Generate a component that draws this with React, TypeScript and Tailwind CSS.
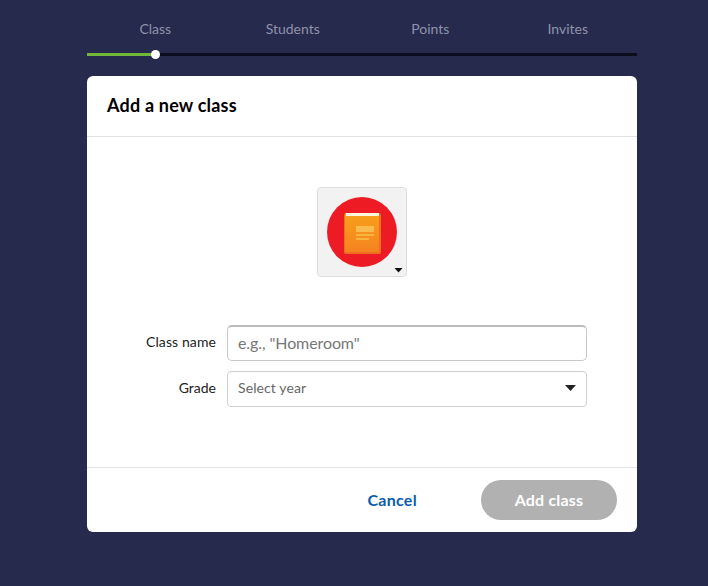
import React from 'react';

const steps = ['Class', 'Students', 'Points', 'Invites'];

function BookBadge() {
  return (
    <div className="relative w-[90px] h-[90px] bg-[#f2f2f3] border border-[#dcdcdc] rounded-[4px] flex items-center justify-center">
      <svg width="70" height="70" viewBox="0 0 70 70">
        <defs>
          <linearGradient id="cover" x1="0" y1="0" x2="0" y2="1">
            <stop offset="0" stopColor="#f7a11a" />
            <stop offset="1" stopColor="#f58220" />
          </linearGradient>
        </defs>
        <circle cx="35" cy="35" r="35" fill="#ed1c24" />
        <rect x="17" y="16" width="37" height="41" rx="2" fill="#ee6f1f" />
        <rect x="18" y="16" width="34" height="39" fill="url(#cover)" />
        <rect x="19" y="16" width="33" height="3" fill="#fff8dc" />
        <rect x="29" y="29" width="18" height="6" fill="#f9bb4d" />
        <rect x="29" y="37" width="18" height="2" fill="#f9b63f" />
        <rect x="29" y="41" width="13" height="2" fill="#f9b63f" />
      </svg>
      <svg className="absolute right-[3px] bottom-[3px]" width="9" height="6" viewBox="0 0 9 6">
        <path d="M0.5 1h8L4.5 5.5z" fill="#111" />
      </svg>
    </div>
  );
}

export default function App() {
  return (
    <div className="min-h-[586px] bg-[#262a4d] font-['Lato','Open_Sans',sans-serif]">
      <div className="w-[550px] ml-[87px]">
        <div className="grid grid-cols-4 pt-[20px]">
          {steps.map((step) => (
            <div key={step} className="text-center text-[14px] leading-[17px] text-[#8f92ab] pr-[1px]">
              {step}
            </div>
          ))}
        </div>
        <div className="relative mt-[16px] h-[3px] bg-[#0c0d1e]">
          <div className="h-[3px] w-[68px] bg-[#72b73c]" />
          <div className="absolute left-[64px] top-[-3px] w-[9px] h-[9px] rounded-full bg-white" />
        </div>

        <div className="mt-[20px] h-[456px] bg-white rounded-[6px] flex flex-col">
          <div className="h-[61px] shrink-0 border-b border-[#e2e2e2] px-5 pb-[2px] flex items-center">
            <h1 className="text-[18px] tracking-[0.2px] font-bold text-black">Add a new class</h1>
          </div>

          <div className="flex-1 flex flex-col pt-[50px]">
            <div className="flex justify-center">
              <BookBadge />
            </div>
            <div className="mt-[48px] flex flex-col gap-[10px]">
              <div className="flex items-center gap-[11px]">
                <label className="w-[129px] pb-[4px] text-right text-[14px] tracking-[0.1px] text-[#222]">Class name</label>
                <div className="w-[360px] h-[36px] px-[10px] pb-[2px] flex items-center border border-[#c8c8c8] border-t-2 border-t-[#bbbbbb] rounded-[5px] text-[16px] tracking-[-0.1px] text-[#777]">
                  e.g., "Homeroom"
                </div>
              </div>
              <div className="flex items-center gap-[11px]">
                <label className="w-[129px] pb-[4px] text-right text-[14px] text-[#222]">Grade</label>
                <div className="w-[360px] h-[36px] px-[10px] flex items-center justify-between border border-[#cfcfcf] rounded-[4px] text-[14px] tracking-[0.1px] text-[#666]">
                  <span className="pb-[4px]">Select year</span>
                  <svg className="mb-[2px]" width="11" height="6" viewBox="0 0 11 6">
                    <path d="M0 0h11L5.5 6z" fill="#222" />
                  </svg>
                </div>
              </div>
            </div>
          </div>

          <div className="h-[65px] shrink-0 border-t border-[#e2e2e2] px-5 flex items-center justify-end">
            <span className="text-[16px] tracking-[0.3px] font-bold text-[#0b5cab] mr-[64px]">Cancel</span>
            <div className="w-[136px] h-[40px] rounded-full bg-[#b1b1b1] text-white text-[16px] tracking-[0.2px] font-bold flex items-center justify-center">
              Add class
            </div>
          </div>
        </div>
      </div>
    </div>
  );
}
